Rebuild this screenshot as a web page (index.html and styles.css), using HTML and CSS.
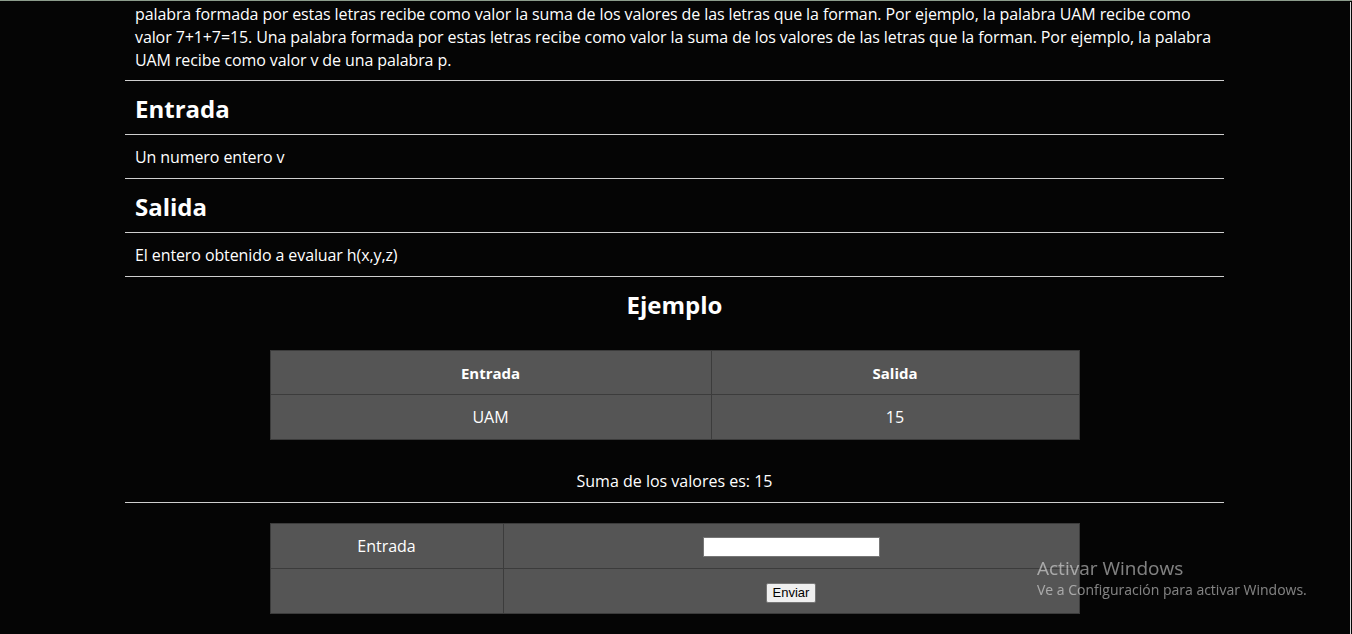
FILE: index.html
```html
<!DOCTYPE html>
<html lang="es">
<head>
<meta charset="utf-8">
<title>Problema</title>
<link rel="stylesheet" href="styles.css">
</head>
<body>
<div class="page">
  <div class="section text-block first">
    <p class="desc">palabra formada por estas letras recibe como valor la suma de los valores de las letras que la forman. Por ejemplo, la palabra UAM recibe como valor 7+1+7=15. Una palabra formada por estas letras recibe como valor la suma de los valores de las letras que la forman. Por ejemplo, la palabra UAM recibe como valor v de una palabra p.</p>
  </div>
  <div class="section head-block"><h2 class="title">Entrada</h2></div>
  <div class="section text-block"><p class="desc">Un numero entero v</p></div>
  <div class="section head-block"><h2 class="title">Salida</h2></div>
  <div class="section text-block"><p class="desc">El entero obtenido a evaluar h(x,y,z)</p></div>
  <div class="section example">
    <h2 class="title center">Ejemplo</h2>
    <table class="grid sample">
      <tr><th class="c1">Entrada</th><th class="c2">Salida</th></tr>
      <tr><td>UAM</td><td>15</td></tr>
    </table>
    <p class="result">Suma de los valores es: 15</p>
  </div>
  <form class="form-area" onsubmit="return false">
    <table class="grid form">
      <tr><td class="f1">Entrada</td><td class="f2"><input class="field" type="text"></td></tr>
      <tr><td class="f1"></td><td class="f2"><button class="send" type="submit">Enviar</button></td></tr>
    </table>
  </form>
</div>
<div class="scroll-edge"></div>
<div class="watermark">
  <div class="wm-title">Activar Windows</div>
  <div class="wm-sub">Ve a Configuración para activar Windows.</div>
</div>
</body>
</html>
```
FILE: styles.css
```css
html, body {
  margin: 0;
  padding: 0;
  background: #050505;
  color: #fff;
}
body {
  border-top: 1px solid #8c9c8c;
  font-family: "Comic Sans MS", "Open Sans", sans-serif;
  font-size: 16px;
  min-height: 633px;
  box-sizing: border-box;
}
.page {
  width: 1099px;
  margin-left: 125px;
}
.section {
  border-bottom: 1px solid #cfcfcf;
}
.desc {
  margin: 0;
  padding: 0 10px;
  line-height: 23px;
  letter-spacing: -0.1px;
}
.text-block {
  padding: 11px 0 9px;
}
.text-block.first {
  padding: 2px 0 8px;
}
.head-block {
  padding: 13px 0 10px;
}
.title {
  margin: 0;
  padding: 0 10px;
  font-size: 24px;
  line-height: 30px;
  font-weight: bold;
}
.title.center {
  text-align: center;
}
.example {
  padding: 13px 0 9px;
}
.grid {
  border-collapse: collapse;
  margin: 0 auto;
  background: #555;
  border: 1px solid #3c3c3c;
}
.grid th, .grid td {
  border: 1px solid #3c3c3c;
  text-align: center;
  padding: 0;
  height: 44px;
  color: #fff;
}
.sample {
  margin-top: 30px;
}
.sample th {
  font-size: 15px;
  font-weight: bold;
  height: 43px;
}
.sample .c1 { width: 440px; }
.sample .c2 { width: 367px; }
.result {
  margin: 30px 0 0;
  text-align: center;
  line-height: 23px;
}
.form-area {
  padding-top: 20px;
}
.form .f1 { width: 232px; }
.form .f2 { width: 575px; }
.field {
  width: 177px;
  height: 20px;
  box-sizing: border-box;
  border: 1px solid #767676;
  background: #fff;
  padding: 1px 2px;
  margin: 0;
  vertical-align: middle;
}
.send {
  font-family: "Liberation Sans", Arial, sans-serif;
  font-size: 13px;
  height: 20px;
  padding: 0 6px;
  background: #efefef;
  border: 1px solid #767676;
  border-radius: 2px;
  color: #000;
  margin: 2px 0 0;
  vertical-align: middle;
}
.scroll-edge {
  position: fixed;
  top: 2px;
  right: 1px;
  bottom: 0;
  width: 1px;
  background: #d8d8d8;
}
.watermark {
  position: fixed;
  left: 1037px;
  top: 556px;
  font-family: "Open Sans", "Noto Sans", sans-serif;
  color: rgba(255, 255, 255, 0.5);
}
.wm-title {
  font-size: 19px;
  line-height: 24px;
}
.wm-sub {
  font-size: 14px;
  line-height: 20px;
}
```
